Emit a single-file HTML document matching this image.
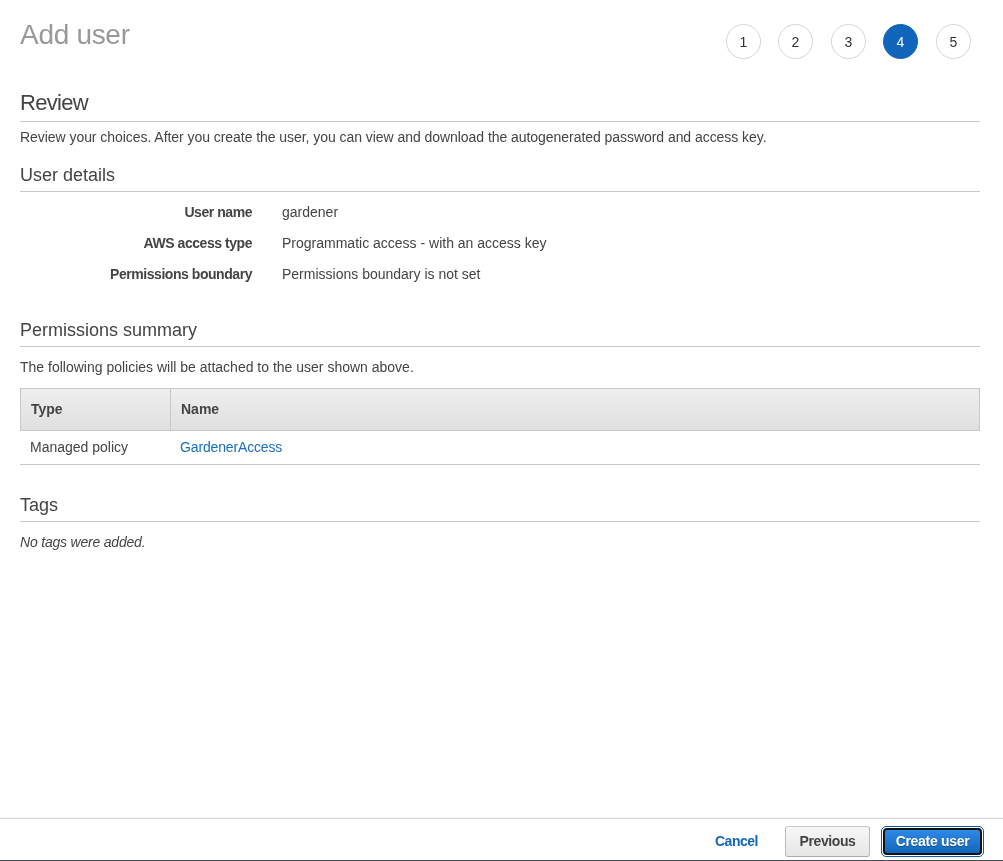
<!DOCTYPE html>
<html><head><meta charset="utf-8">
<style>
*{box-sizing:border-box;margin:0;padding:0}
html,body{width:1003px;height:861px;overflow:hidden;background:#fff;font-family:"Liberation Sans",sans-serif;color:#444;font-size:14px}
.abs{position:absolute;white-space:nowrap}
.title{left:20px;top:19px;letter-spacing:-0.3px;font-size:28px;color:#999;line-height:32px}
.step{position:absolute;top:24px;width:35px;height:35px;border:1px solid #d5d5d5;border-radius:50%;text-align:center;line-height:35px;font-size:14px;color:#333}
.step.on{background:#1166bb;border-color:#1166bb;color:#fff}
.h2{left:20px;font-size:18px;color:#444;line-height:22px}
.h1r{font-size:22px;line-height:26px;letter-spacing:-0.7px}
.rule{position:absolute;left:20px;width:960px;height:1px;background:#c8c8c8}
.txt{font-size:14px;line-height:16px;color:#444}
.lbl{font-weight:bold;text-align:right;right:751px;letter-spacing:-0.45px}
.val{left:282px}
table{position:absolute;left:20px;top:388px;width:960px;border-collapse:collapse}
#wrap{position:absolute;left:0;top:0;width:1003px;height:861px;will-change:transform}
</style></head><body><div id="wrap">
<div class="abs title">Add user</div>
<div class="step" style="left:726px">1</div>
<div class="step" style="left:778px">2</div>
<div class="step" style="left:831px">3</div>
<div class="step on" style="left:883px">4</div>
<div class="step" style="left:936px">5</div>

<div class="abs h2 h1r" style="top:90px">Review</div>
<div class="rule" style="top:121px"></div>
<div class="abs txt" style="left:20px;top:129px;letter-spacing:-0.05px">Review your choices. After you create the user, you can view and download the autogenerated password and access key.</div>

<div class="abs h2" style="top:164px">User details</div>
<div class="rule" style="top:191px"></div>
<div class="abs txt lbl" style="top:204px">User name</div>
<div class="abs txt val" style="top:204px">gardener</div>
<div class="abs txt lbl" style="top:235px">AWS access type</div>
<div class="abs txt val" style="top:235px">Programmatic access - with an access key</div>
<div class="abs txt lbl" style="top:266px">Permissions boundary</div>
<div class="abs txt val" style="top:266px">Permissions boundary is not set</div>

<div class="abs h2" style="top:319px">Permissions summary</div>
<div class="rule" style="top:346px"></div>
<div class="abs txt" style="left:20px;top:359px">The following policies will be attached to the user shown above.</div>

<div style="position:absolute;left:20px;top:388px;width:960px;height:43px;border:1px solid #c8c8c8;background:linear-gradient(#eeeeee,#e0e0e0)"></div>
<div style="position:absolute;left:170px;top:388px;width:1px;height:43px;background:#c8c8c8"></div>
<div class="abs txt" style="left:31px;top:401px;font-weight:bold">Type</div>
<div class="abs txt" style="left:181px;top:401px;font-weight:bold">Name</div>
<div class="abs txt" style="left:30px;top:439px">Managed policy</div>
<div class="abs txt" style="left:180px;top:439px;color:#1a6fbf;letter-spacing:-0.15px">GardenerAccess</div>
<div class="rule" style="top:464px"></div>

<div class="abs h2" style="top:494px">Tags</div>
<div class="rule" style="top:521px"></div>
<div class="abs txt" style="left:20px;top:534px;font-style:italic;letter-spacing:-0.2px">No tags were added.</div>

<div style="position:absolute;left:0;top:818px;width:1003px;height:1px;background:#d8d8d8;box-shadow:0 -1px 2px rgba(0,0,0,.06)"></div>
<div class="abs txt" style="left:715px;top:833px;font-weight:bold;color:#1166bb;letter-spacing:-0.5px">Cancel</div>
<div style="position:absolute;left:785px;top:826px;width:85px;height:31px;border:1px solid #bbb;border-top-color:#ccc;border-bottom-color:#aaa;border-radius:3px;background:linear-gradient(#f7f7f7,#e6e6e6);font-weight:bold;color:#444;text-align:center;line-height:29px;letter-spacing:-0.4px">Previous</div>
<div style="position:absolute;left:881px;top:826px;width:103px;height:31px;border:1px solid #0d5ba6;border-radius:5px;padding:1px;background:#fff"><div style="width:100%;height:100%;border:2px solid #111;border-radius:4px;background:linear-gradient(#2e8ae6,#1166bb);color:#fff;font-weight:bold;text-align:center;line-height:23px;letter-spacing:-0.3px;text-shadow:0 1px 1px rgba(0,0,0,.3)">Create user</div></div>
<div style="position:absolute;left:0;top:860px;width:1003px;height:1px;background:#454b52"></div>
</div></body></html>
